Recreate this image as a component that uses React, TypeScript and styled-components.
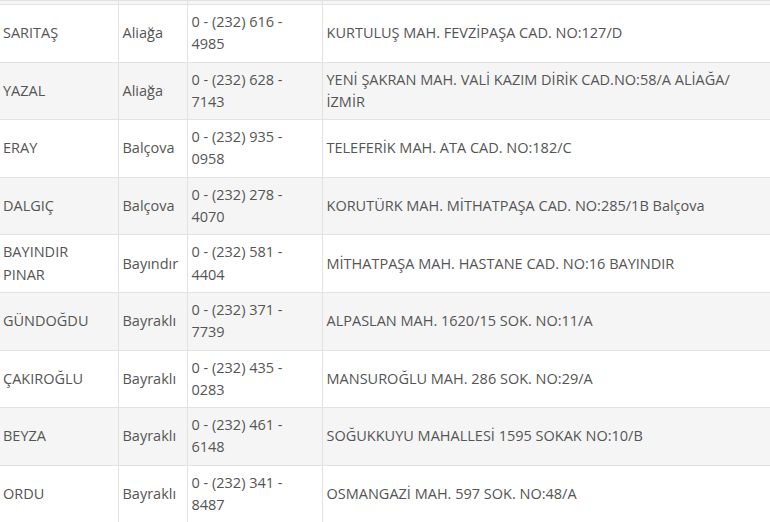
import React from "react";
import styled, { createGlobalStyle } from "styled-components";

const Global = createGlobalStyle`
  html, body { margin: 0; padding: 0; background: #fff; overflow: hidden; }
  body { font-family: "Open Sans", "Liberation Sans", sans-serif; }
`;

const Table = styled.table`
  border-collapse: collapse;
  table-layout: fixed;
  width: 776px;
  margin-left: -1px;
  font-family: "Open Sans", "Liberation Sans", sans-serif;
  font-size: 14.5px;
  line-height: 22.3px;
  color: #555;
`;

const Row = styled.tr<{ $alt: boolean }>`
  background: ${(p) => (p.$alt ? "#f5f5f5" : "#ffffff")};
`;

const StubRow = styled.tr`
  background: #f5f5f5;
  td { padding: 0; height: 3px; }
`;

const Cell = styled.td`
  border: 1px solid #e2e2e2;
  padding: 6px 8px 6px 4px;
  vertical-align: middle;
  text-align: left;
  &:first-child { border-left: none; }
`;

type Item = { name: string; district: string; phone: string; address: string };

const rows: Item[] = [
  { name: "SARITAŞ", district: "Aliağa", phone: "0 - (232) 616 - 4985", address: "KURTULUŞ MAH. FEVZİPAŞA CAD. NO:127/D" },
  { name: "YAZAL", district: "Aliağa", phone: "0 - (232) 628 - 7143", address: "YENİ ŞAKRAN MAH. VALİ KAZIM DİRİK CAD.NO:58/A ALİAĞA/ İZMİR" },
  { name: "ERAY", district: "Balçova", phone: "0 - (232) 935 - 0958", address: "TELEFERİK MAH. ATA CAD. NO:182/C" },
  { name: "DALGIÇ", district: "Balçova", phone: "0 - (232) 278 - 4070", address: "KORUTÜRK MAH. MİTHATPAŞA CAD. NO:285/1B Balçova" },
  { name: "BAYINDIR PINAR", district: "Bayındır", phone: "0 - (232) 581 - 4404", address: "MİTHATPAŞA MAH. HASTANE CAD. NO:16 BAYINDIR" },
  { name: "GÜNDOĞDU", district: "Bayraklı", phone: "0 - (232) 371 - 7739", address: "ALPASLAN MAH. 1620/15 SOK. NO:11/A" },
  { name: "ÇAKIROĞLU", district: "Bayraklı", phone: "0 - (232) 435 - 0283", address: "MANSUROĞLU MAH. 286 SOK. NO:29/A" },
  { name: "BEYZA", district: "Bayraklı", phone: "0 - (232) 461 - 6148", address: "SOĞUKKUYU MAHALLESİ 1595 SOKAK NO:10/B" },
  { name: "ORDU", district: "Bayraklı", phone: "0 - (232) 341 - 8487", address: "OSMANGAZİ MAH. 597 SOK. NO:48/A" },
];

export default function App() {
  return (
    <>
      <Global />
      <Table>
        <colgroup>
          <col style={{ width: 119 }} />
          <col style={{ width: 69 }} />
          <col style={{ width: 135 }} />
          <col />
        </colgroup>
        <tbody>
          <StubRow>
            <Cell />
            <Cell />
            <Cell />
            <Cell />
          </StubRow>
          {rows.map((r, i) => (
            <Row key={r.name} $alt={i % 2 === 1}>
              <Cell>{r.name}</Cell>
              <Cell>{r.district}</Cell>
              <Cell>{r.phone}</Cell>
              <Cell>{r.address}</Cell>
            </Row>
          ))}
        </tbody>
      </Table>
    </>
  );
}
